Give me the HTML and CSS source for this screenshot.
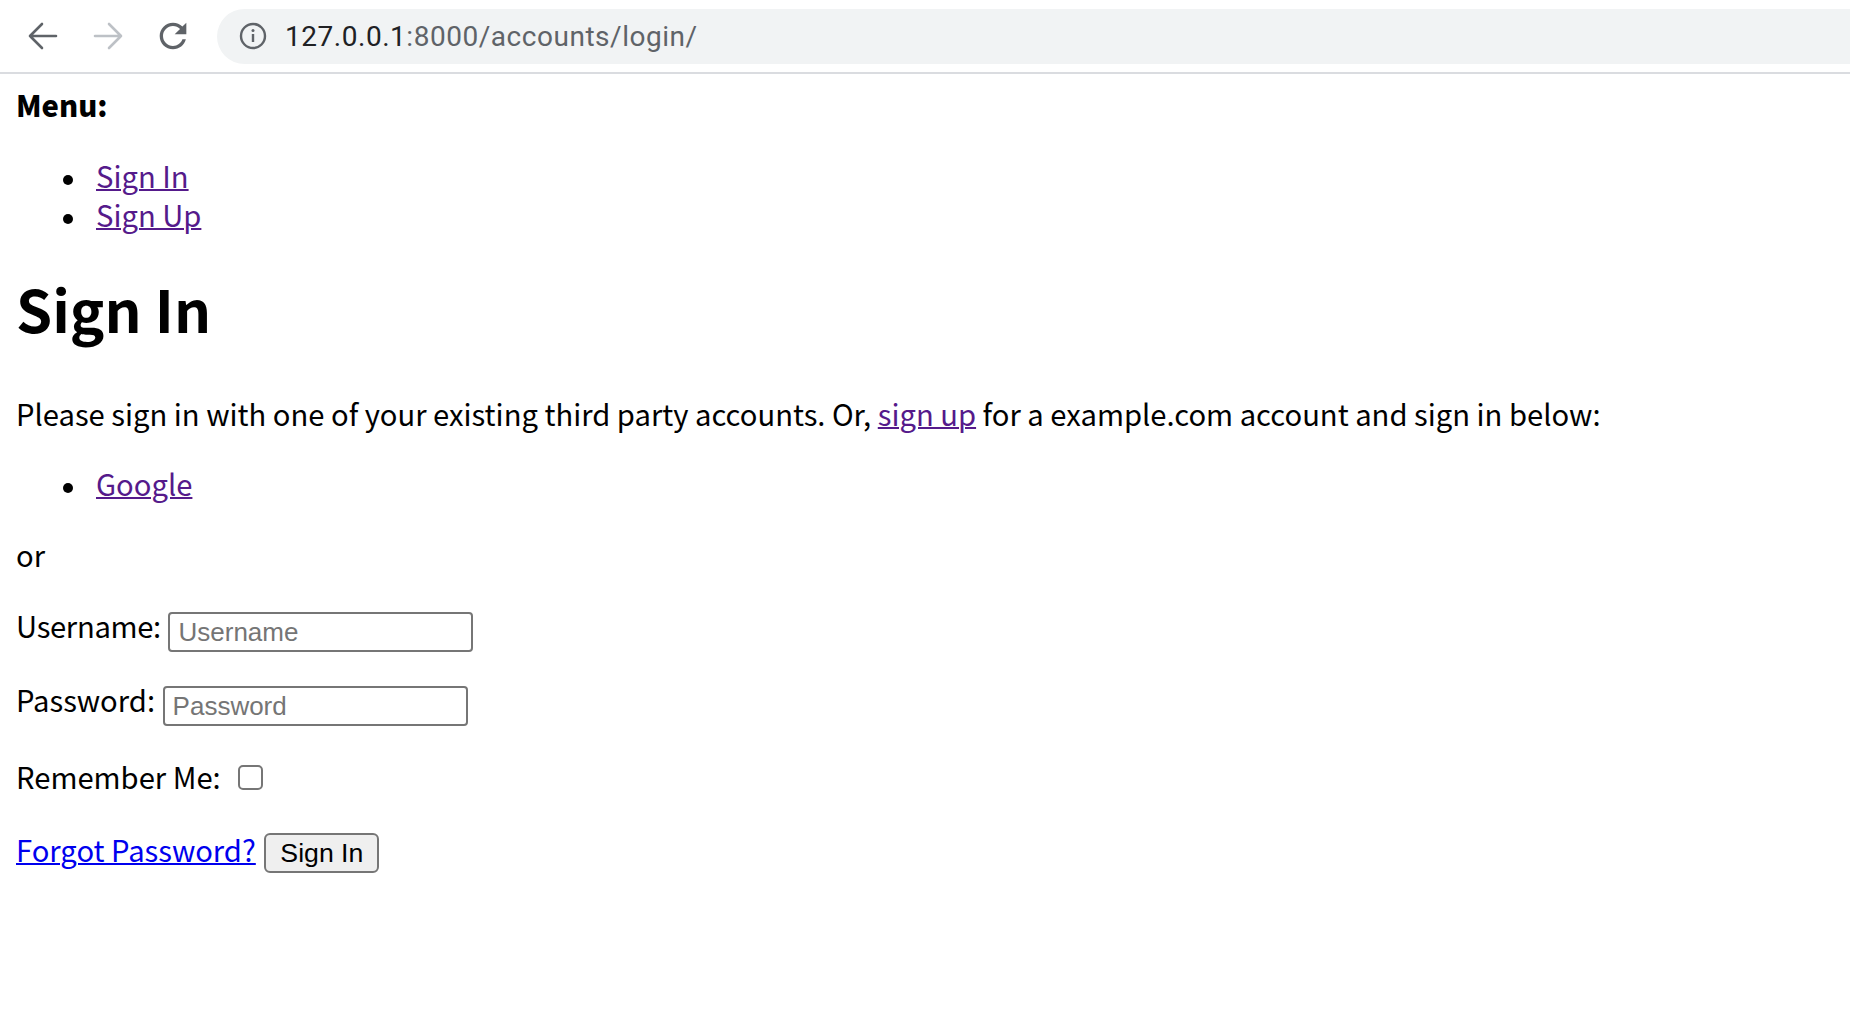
FILE: index.html
```html
<!DOCTYPE html>
<html lang="en">
<head>
<meta charset="utf-8">
<title>Sign In</title>
<link rel="stylesheet" href="styles.css">
</head>
<body>
<header class="toolbar">
  <div class="nav-buttons">
    <svg class="tb-icon" viewBox="0 0 40 40" width="40" height="40" aria-hidden="true">
      <path d="M33 20H7M19 8L7 20l12 12" fill="none" stroke="#5f6368" stroke-width="2.6" stroke-linecap="round" stroke-linejoin="round"/>
    </svg>
    <svg class="tb-icon" viewBox="0 0 40 40" width="40" height="40" aria-hidden="true">
      <path d="M7 20h26M21 8l12 12-12 12" fill="none" stroke="#bdc1c6" stroke-width="2.6" stroke-linecap="round" stroke-linejoin="round"/>
    </svg>
    <svg class="tb-icon" viewBox="0 0 24 24" width="40" height="40" aria-hidden="true">
      <path fill="#5f6368" d="M17.65 6.35C16.2 4.9 14.21 4 12 4c-4.42 0-7.99 3.58-7.99 8s3.57 8 7.99 8c3.73 0 6.84-2.55 7.73-6h-2.08c-.82 2.33-3.04 4-5.65 4-3.31 0-6-2.69-6-6s2.69-6 6-6c1.66 0 3.14.69 4.22 1.78L13 11h7V4l-2.35 2.35z"/>
    </svg>
  </div>
  <div class="omnibox">
    <svg class="info-icon" viewBox="0 0 28 28" width="28" height="28" aria-hidden="true">
      <circle cx="14" cy="14" r="12" fill="none" stroke="#5f6368" stroke-width="2.4"/>
      <rect x="12.8" y="12" width="2.4" height="8" fill="#5f6368"/>
      <circle cx="14" cy="8.6" r="1.5" fill="#5f6368"/>
    </svg>
    <span class="url"><span class="host">127.0.0.1</span><span class="path">:8000/accounts/login/</span></span>
  </div>
</header>
<main class="page">
  <div class="menu-title"><strong>Menu:</strong></div>
  <ul class="list menu-list">
    <li><a class="visited" href="#">Sign In</a></li>
    <li><a class="visited" href="#">Sign Up</a></li>
  </ul>
  <h1 class="title">Sign In</h1>
  <p class="text intro">Please sign in with one of your existing third party accounts. Or, <a class="visited" href="#">sign up</a> for a example.com account and sign in below:</p>
  <ul class="list providers">
    <li><a class="visited" href="#">Google</a></li>
  </ul>
  <p class="text or">or</p>
  <form class="login">
    <p class="row row-user"><label for="u">Username:</label> <input class="field" id="u" type="text" placeholder="Username"></p>
    <p class="row row-pass"><label for="p">Password:</label> <input class="field" id="p" type="password" placeholder="Password"></p>
    <p class="row row-remember"><label for="r">Remember Me:</label> <input class="check" id="r" type="checkbox"></p>
    <p class="row row-submit"><a class="link" href="#">Forgot Password?</a> <button class="btn" type="button">Sign In</button></p>
  </form>
</main>
</body>
</html>
```

FILE: styles.css
```css
html, body {
  margin: 0;
  padding: 0;
  background: #ffffff;
}

body {
  font-family: "Noto Sans CJK KR", "Noto Sans", sans-serif;
  font-size: 29.2px;
  line-height: 39px;
  color: #000000;
}

/* browser toolbar */
.toolbar {
  height: 72px;
  border-bottom: 2px solid #dadce0;
  display: flex;
  align-items: center;
  box-sizing: content-box;
  overflow: hidden;
}

.nav-buttons {
  display: flex;
  align-items: center;
  gap: 25px;
  padding-left: 23px;
  width: 194px;
  box-sizing: border-box;
  flex: none;
}

.tb-icon {
  display: block;
  flex: none;
}

.omnibox {
  flex: none;
  width: 1700px;
  height: 55px;
  border-radius: 28px;
  background: #f1f3f4;
  display: flex;
  align-items: center;
  padding-left: 22px;
  box-sizing: border-box;
  margin-left: 23px;
}

.info-icon {
  display: block;
  flex: none;
}

.url {
  margin-left: 18px;
  font-family: Roboto, "Liberation Sans", sans-serif;
  font-size: 28px;
  letter-spacing: 0.53px;
}

.host { color: #202124; }
.path { color: #5f6368; }

/* page content */
.page {
  padding: 11px 16px 0;
}

.menu-title {
  font-weight: bold;
}

.list {
  margin: 0;
  padding-left: 80px;
  list-style: none;
}

.list li {
  position: relative;
}

.list li::before {
  content: "";
  position: absolute;
  left: -33px;
  top: 19px;
  width: 10px;
  height: 10px;
  border-radius: 50%;
  background: #000;
}

.menu-list { margin-top: 32px; }
.providers { margin-top: 31px; }

a {
  text-decoration-thickness: 2px;
}

.visited { color: #551a8b; }
.link { color: #0000ee; }

.title {
  font-size: 58px;
  line-height: 78px;
  margin: 35px 0 0;
  font-weight: bold;
}

.text {
  margin: 0;
}

.intro { margin-top: 47px; }
.or { margin-top: 31.5px; }

.login {
  margin: 0;
}

.row {
  margin: 0;
}

.row-user { margin-top: 32.5px; }
.row-pass { margin-top: 28.3px; }
.row-remember { margin-top: 30.3px; }
.row-submit { margin-top: 34.4px; }

.row-user label {
  letter-spacing: -0.3px;
}

.field {
  width: 305px;
  height: 40px;
  box-sizing: border-box;
  border: 2px solid #767676;
  border-radius: 4px;
  padding: 2px 8px;
  font-family: "Liberation Sans", Arial, sans-serif;
  font-size: 26px;
  color: #000;
  background: #fff;
  margin: 0 0 0 1px;
  vertical-align: -2.5px;
}

.field::placeholder {
  color: #757575;
}

.check {
  appearance: none;
  -webkit-appearance: none;
  width: 25px;
  height: 25px;
  box-sizing: border-box;
  border: 2px solid #767676;
  border-radius: 5px;
  margin: 0 0 0 11px;
  background: #fff;
  vertical-align: -1px;
}

.btn {
  font-family: "Liberation Sans", Arial, sans-serif;
  font-size: 26.67px;
  width: 115px;
  height: 40px;
  box-sizing: border-box;
  padding: 0;
  border: 2px solid #767676;
  border-radius: 6px;
  background: #efefef;
  color: #000;
  margin: 0 0 0 2px;
  text-align: center;
}
```
